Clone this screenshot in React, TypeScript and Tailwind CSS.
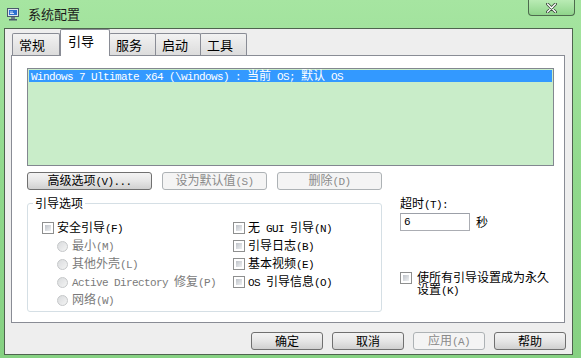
import React from 'react';

const CJK = /([\u3000-\u9fff\uff00-\uffef]+)/;

// SimSun-like mix: CJK at 12px, Latin in a 6px-per-char mono
const Mixed: React.FC<{ text: string }> = ({ text }) => (
    <>
        {text.split(CJK).filter(Boolean).map((s, i) =>
            CJK.test(s) ? (
                <span key={i} className="font-['Noto_Sans_CJK_SC'] text-[12px] leading-[12px]">{s}</span>
            ) : (
                <span key={i} className="font-['Liberation_Mono'] text-[11px] tracking-[-0.6px] leading-[12px] whitespace-pre">{s}</span>
            )
        )}
    </>
);

const Button: React.FC<{ label: string; width: string; disabled?: boolean }> = ({ label, width, disabled }) => (
    <div
        className={`${width} h-[18px] rounded-[3px] border flex items-center justify-center ${
            disabled
                ? 'border-[#adb2b5] bg-[#f4f4f4] text-[#8a8a8a]'
                : 'border-[#707070] bg-gradient-to-b from-[#f3f3f3] via-[#e6e6e6] to-[#d0d0d0] text-black'
        }`}
    >
        <span className="flex items-baseline"><Mixed text={label} /></span>
    </div>
);

const CheckBox: React.FC = () => (
    <div className="w-[12px] h-[12px] border border-[#8e8f8f] bg-white p-[2px] shrink-0">
        <div className="w-full h-full bg-gradient-to-br from-[#bfc3c9] to-[#eef0f2]" />
    </div>
);

const Radio: React.FC = () => (
    <div className="w-[11px] h-[11px] rounded-full border border-[#c5c7c9] bg-gradient-to-br from-[#d9dbdd] to-[#f4f4f4] shrink-0" />
);

const CheckRow: React.FC<{ label: string }> = ({ label }) => (
    <div className="h-[18px] flex items-center gap-[3px]">
        <CheckBox />
        <span className="flex items-baseline text-black"><Mixed text={label} /></span>
    </div>
);

const RadioRow: React.FC<{ label: string }> = ({ label }) => (
    <div className="h-[18px] flex items-center gap-[4px] pl-[15px]">
        <Radio />
        <span className="flex items-baseline text-[#7a7a7a]"><Mixed text={label} /></span>
    </div>
);

const tabs = [
    { name: '常规', w: 'w-[48px]' },
    { name: '引导', w: 'w-[50px]', active: true },
    { name: '服务', w: 'w-[47px]' },
    { name: '启动', w: 'w-[46px]' },
    { name: '工具', w: 'w-[47px]' },
];

export default function App() {
    return (
        <div className="w-[581px] h-[358px] overflow-hidden flex flex-col bg-gradient-to-b from-[#a6e5a1] via-[#90d98c] to-[#86d182] font-['Noto_Sans_CJK_SC'] text-[12px] text-black">
            {/* title bar */}
            <div className="h-[28px] flex items-start shrink-0">
                <div className="flex items-center gap-[9px] pl-[7px] pt-[7px]">
                    <svg width="12" height="13" viewBox="0 0 12 13">
                        <rect x="0.5" y="0.5" width="11" height="8" fill="#dfe6ee" stroke="#4a5a6a" />
                        <rect x="2" y="2" width="8" height="5" fill="#2f6fd0" />
                        <path d="M3 4h3M3 5.5h4" stroke="#fff" strokeWidth="0.8" />
                        <rect x="4" y="9" width="4" height="2" fill="#6b7b8b" />
                        <rect x="2" y="11" width="8" height="1.5" fill="#4a5a6a" />
                    </svg>
                    <span className="text-[13px] leading-[14px] text-[#1a1a1a]">系统配置</span>
                </div>
                <div className="ml-auto mr-[6px] w-[47px] h-[16px] rounded-b-[4px] border border-t-0 border-[#4d6a4d] bg-gradient-to-b from-[#b9ebb4] to-[#8fd58b] flex items-center justify-center">
                    <svg width="11" height="10" viewBox="0 0 11 10">
                        <path d="M1.5 1L9.5 9M9.5 1L1.5 9" stroke="#3a4a3a" strokeWidth="3" strokeLinecap="round" />
                        <path d="M1.5 1L9.5 9M9.5 1L1.5 9" stroke="#ffffff" strokeWidth="1.4" strokeLinecap="round" />
                    </svg>
                </div>
            </div>

            {/* client area */}
            <div className="flex-1 ml-[4px] mr-[8px] mb-[3px] border border-[#4f634f] bg-[#eeeeee] flex flex-col">
                <div className="pl-[6px] pr-[7px] flex flex-col">
                    {/* tabs */}
                    <div className="flex items-end h-[26px] pl-[1px]">
                        {tabs.map(t =>
                            t.active ? (
                                <div
                                    key={t.name}
                                    className={`${t.w} h-[27px] -mb-px relative z-10 bg-white border border-b-0 border-[#898c95] rounded-t-[2px] pl-[7px] pt-[4px] text-[13px] leading-[14px]`}
                                >
                                    {t.name}
                                </div>
                            ) : (
                                <div
                                    key={t.name}
                                    className={`${t.w} h-[22px] -ml-px first:ml-0 bg-gradient-to-b from-[#f2f2f2] to-[#dcdcdc] border border-b-0 border-[#898c95] rounded-t-[2px] pl-[6px] pt-[4px] text-[13px] leading-[14px]`}
                                >
                                    {t.name}
                                </div>
                            )
                        )}
                    </div>

                    {/* tab panel */}
                    <div className="h-[268px] bg-white border border-[#898c95] flex flex-col pl-[15px]">
                        <div className="mt-[12px] w-[527px] h-[98px] border border-[#828790] bg-[#c9edc9] pt-[1px] px-px">
                            <div className="h-[12px] bg-[#3399ff] text-white flex items-center pl-[2px]">
                                <span className="flex items-baseline">
                                    <Mixed text={'Windows 7 Ultimate x64 (\\windows) : 当前 OS; 默认 OS'} />
                                </span>
                            </div>
                        </div>

                        <div className="mt-[6px] flex gap-[10px]">
                            <Button label="高级选项(V)..." width="w-[125px]" />
                            <Button label="设为默认值(S)" width="w-[105px]" disabled />
                            <Button label="删除(D)" width="w-[105px]" disabled />
                        </div>

                        <div className="mt-[7px] flex">
                            {/* boot options group */}
                            <div className="w-[355px] h-[115px] pt-[6px]">
                                <div className="h-full border border-[#d5dfe5] rounded-[3px] flex flex-col">
                                    <div className="-mt-[7px] ml-[5px] w-fit px-[2px] bg-white text-[12px] leading-[12px]">引导选项</div>
                                    <div className="mt-[10px] flex">
                                        <div className="w-[205px] pl-[14px] flex flex-col">
                                            <CheckRow label="安全引导(F)" />
                                            <RadioRow label="最小(M)" />
                                            <RadioRow label="其他外壳(L)" />
                                            <RadioRow label="Active Directory 修复(P)" />
                                            <RadioRow label="网络(W)" />
                                        </div>
                                        <div className="flex flex-col">
                                            <CheckRow label="无 GUI 引导(N)" />
                                            <CheckRow label="引导日志(B)" />
                                            <CheckRow label="基本视频(E)" />
                                            <CheckRow label="OS 引导信息(O)" />
                                        </div>
                                    </div>
                                </div>
                            </div>

                            {/* timeout column */}
                            <div className="ml-[18px] flex flex-col">
                                <div className="h-[12px] flex items-baseline"><Mixed text="超时(T):" /></div>
                                <div className="mt-[4px] flex items-center gap-[6px]">
                                    <div className="w-[70px] h-[18px] border border-[#abadb3] border-t-[#9ca0a8] bg-white pl-[3px] flex items-center">
                                        <span className="font-['Liberation_Mono'] text-[11px] leading-[12px]">6</span>
                                    </div>
                                    <span className="text-[12px] leading-[12px]">秒</span>
                                </div>
                                <div className="mt-[40px] flex items-start gap-[5px]">
                                    <div className="mt-[1px]"><CheckBox /></div>
                                    <div className="w-[134px] leading-[12px]">
                                        <span className="text-[12px] leading-[12px]">使所有引导设置成为永久设置</span>
                                        <span className="font-['Liberation_Mono'] text-[11px] tracking-[-0.6px] leading-[12px]">(K)</span>
                                    </div>
                                </div>
                            </div>
                        </div>
                    </div>
                </div>

                {/* dialog buttons */}
                <div className="mt-[9px] pr-[6px] flex justify-end gap-[9px]">
                    <Button label="确定" width="w-[72px]" />
                    <Button label="取消" width="w-[72px]" />
                    <Button label="应用(A)" width="w-[72px]" disabled />
                    <Button label="帮助" width="w-[72px]" />
                </div>
            </div>
        </div>
    );
}
